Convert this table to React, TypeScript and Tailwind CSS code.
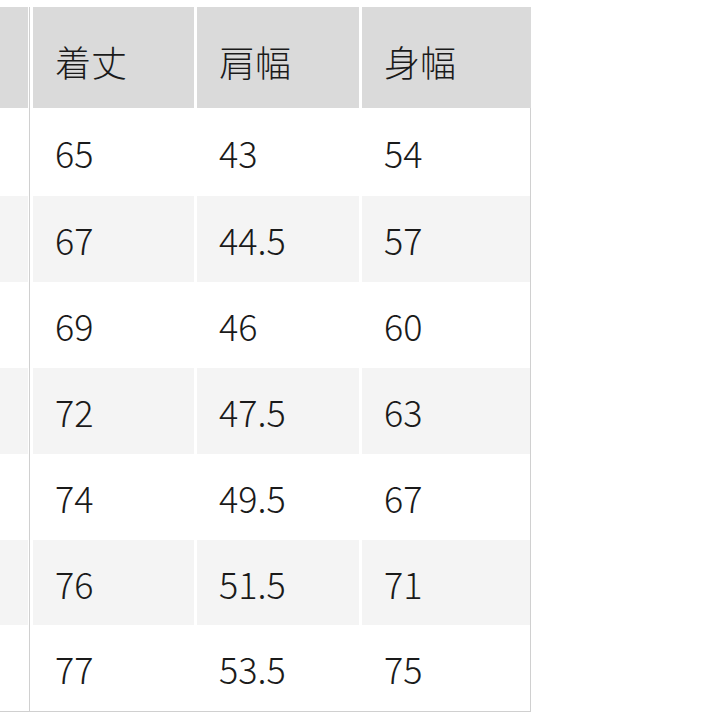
import React from "react";

// size chart rows: 着丈 / 肩幅 / 身幅
const rows: [string, string, string][] = [
  ["65", "43", "54"],
  ["67", "44.5", "57"],
  ["69", "46", "60"],
  ["72", "47.5", "63"],
  ["74", "49.5", "67"],
  ["76", "51.5", "71"],
  ["77", "53.5", "75"],
];

const heights = ["h-[88px]", "h-[86px]", "h-[86px]", "h-[86px]", "h-[86px]", "h-[85px]", "h-[86px]"];

function Row({
  cells,
  bg,
  height,
  header,
}: {
  cells: string[];
  bg: string;
  height: string;
  header?: boolean;
}) {
  const cellText = header ? "pt-[6px]" : "pt-0";
  return (
    <div className={`flex ${height}`}>
      <div className={`w-[28px] ${bg}`} />
      <div className="ml-px mr-[3px] w-px bg-[#d0d0d0]" />
      <div className={`w-[161px] ${bg} flex items-center pl-[22px] ${cellText}`}>{cells[0]}</div>
      <div className="w-[3px]" />
      <div className={`w-[162px] ${bg} flex items-center pl-[22px] ${cellText}`}>{cells[1]}</div>
      <div className="w-[3px]" />
      <div className={`w-[168px] ${bg} flex items-center pl-[22px] ${cellText}`}>{cells[2]}</div>
      <div className={`w-px ${header ? "bg-[#dadada]" : "bg-[#d0d0d0]"}`} />
    </div>
  );
}

export default function App() {
  return (
    <div
      className="w-[720px] h-[720px] bg-white pt-[7px] text-[36px] font-light leading-none text-[#1a1a1a] overflow-hidden"
      style={{ fontFamily: '"Noto Sans CJK JP", "Noto Sans", sans-serif' }}
    >
      <div className="w-[531px]">
        <Row cells={["着丈", "肩幅", "身幅"]} bg="bg-[#dadada]" height="h-[101px]" header />
        {rows.map((r, i) => (
          <Row key={i} cells={r} bg={i % 2 === 0 ? "bg-white" : "bg-[#f4f4f4]"} height={heights[i]} />
        ))}
        <div className="h-px bg-[#d0d0d0]" />
      </div>
    </div>
  );
}
